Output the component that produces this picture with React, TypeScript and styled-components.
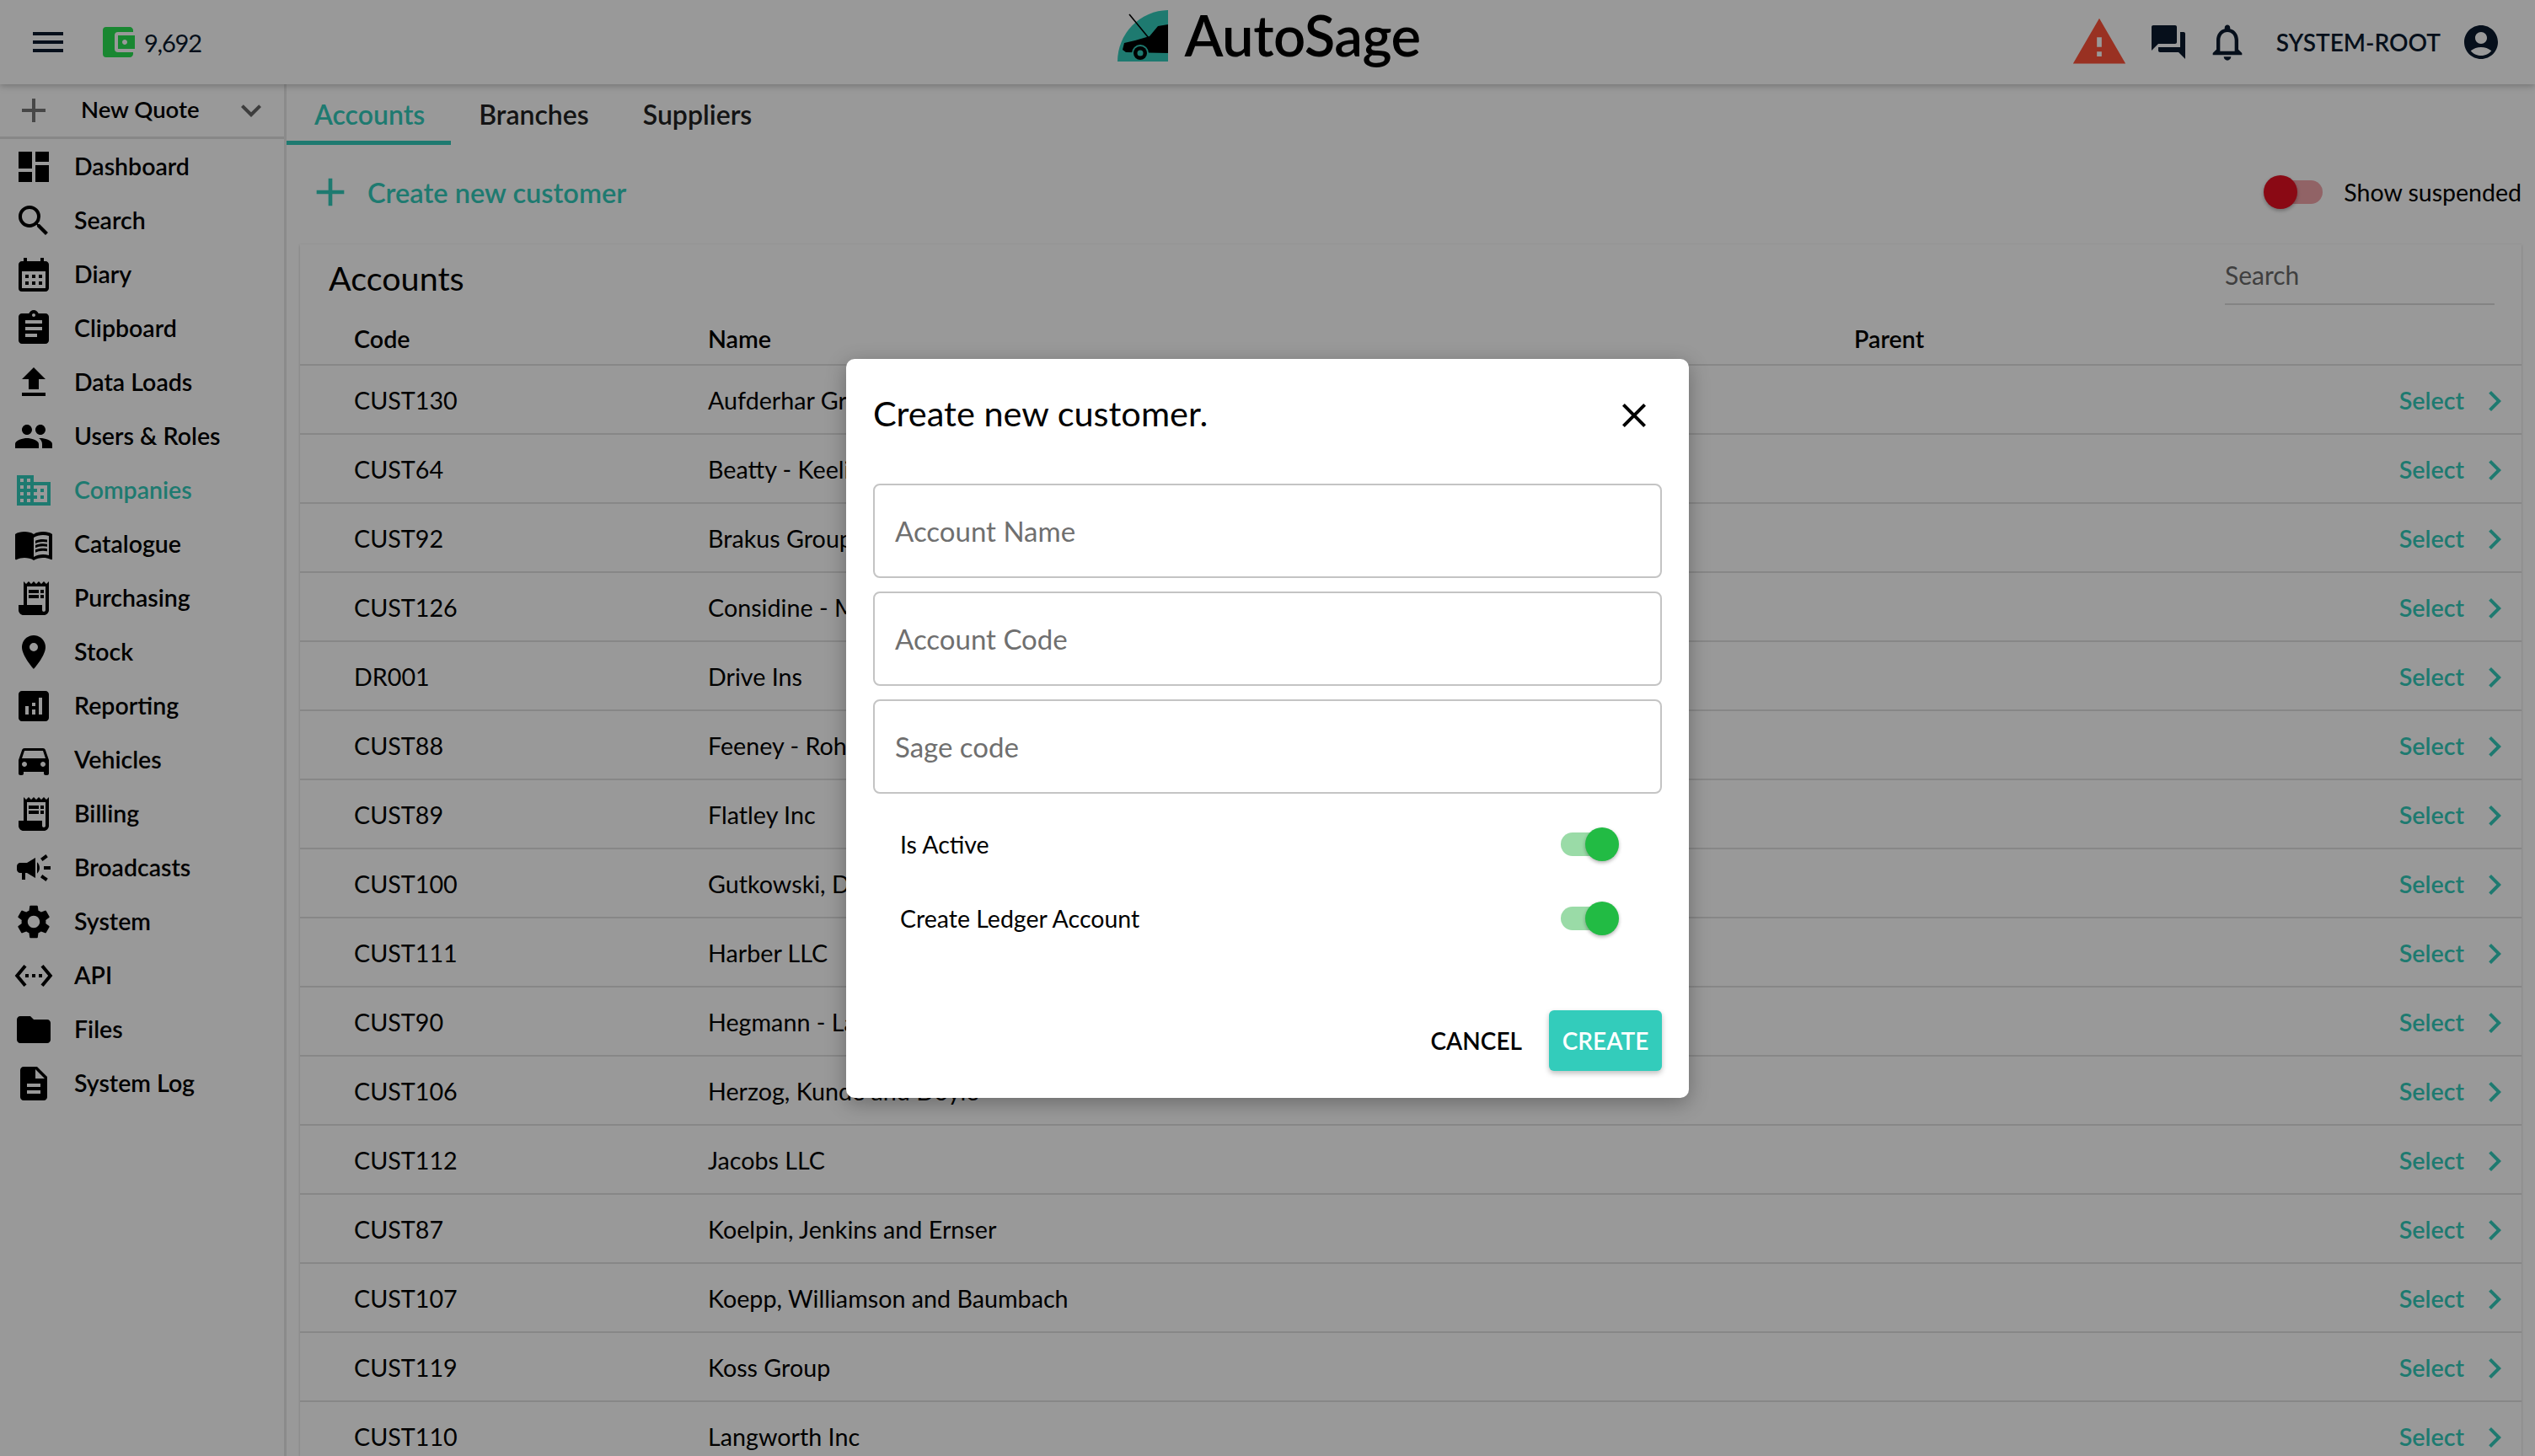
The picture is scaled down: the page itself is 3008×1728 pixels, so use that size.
import React from "react";
import styled, { createGlobalStyle } from "styled-components";
import {
  MdAccountBalanceWallet,
  MdAccountCircle,
  MdAdd,
  MdAnalytics,
  MdAssignment,
  MdCalendarMonth,
  MdCampaign,
  MdChevronRight,
  MdClose,
  MdDashboard,
  MdDescription,
  MdDirectionsCar,
  MdDomain,
  MdExpandMore,
  MdFileUpload,
  MdFolder,
  MdForum,
  MdMenu,
  MdMenuBook,
  MdNotificationsNone,
  MdPeople,
  MdPlace,
  MdReceiptLong,
  MdSearch,
  MdSettings,
  MdSettingsEthernet,
  MdWarning,
} from "react-icons/md";

const TEAL = "#33ccbb";
const INK = "#0a1a2e";
const FONT = `"Lato", "Noto Sans", sans-serif`;

const GlobalStyle = createGlobalStyle`
  html, body {
    margin: 0;
    background: #fff;
  }
  #root {
    width: 3008px;
    height: 1728px;
    overflow: hidden;
    position: relative;
    font-family: ${FONT};
    color: #000;
  }
  * {
    box-sizing: border-box;
  }
`;

const Page = styled.div`
  width: 3008px;
  height: 1728px;
  display: flex;
  flex-direction: column;
`;

const Header = styled.header`
  height: 100px;
  flex: none;
  display: grid;
  grid-template-columns: 1fr auto 1fr;
  align-items: center;
  background: #fff;
  box-shadow: 0 2px 8px rgba(0, 0, 0, 0.25);
  position: relative;
  z-index: 2;
`;

const HeaderLeft = styled.div`
  display: flex;
  align-items: center;
  padding-left: 33px;
  color: ${INK};
`;

const Wallet = styled.div`
  display: flex;
  align-items: center;
  margin-left: 35px;
  font-size: 29px;
  font-weight: 400;
  letter-spacing: -1.2px;
  color: ${INK};
  svg {
    color: #2ae153;
    margin-right: 7px;
  }
`;

const Logo = styled.div`
  display: flex;
  align-items: center;
  gap: 19px;
  margin-top: -14px;
  margin-left: 4px;
`;

const LogoText = styled.span`
  font-size: 67px;
  font-weight: 600;
  letter-spacing: -0.5px;
  line-height: 72px;
  margin-top: -5px;
`;

const HeaderRight = styled.div`
  display: flex;
  align-items: center;
  justify-content: flex-end;
  padding-right: 40px;
  color: ${INK};
`;

const AlertIcon = styled(MdWarning)`
  color: #ff533a;
  margin-right: 24px;
`;

const BellIcon = styled(MdNotificationsNone)`
  margin-left: 20px;
`;

const UserName = styled.span`
  font-size: 28px;
  font-weight: 600;
  margin: 0 24px 0 32px;
`;

const Body = styled.div`
  flex: 1;
  display: flex;
  min-height: 0;
`;

const Sidebar = styled.aside`
  width: 340px;
  flex: none;
  border-right: 3px solid #e8e8e8;
`;

const QuoteRow = styled.div`
  height: 65px;
  display: flex;
  align-items: center;
  padding-left: 16px;
  border-bottom: 3px solid #e2e2e2;
  font-size: 27.5px;
  font-weight: 600;
  svg:first-child {
    color: #777;
  }
`;

const QuoteLabel = styled.span`
  margin-left: 32px;
  width: 178px;
  margin-top: -3px;
`;

const NavList = styled.nav`
  display: flex;
  flex-direction: column;
  padding-top: 1px;
`;

const NavItem = styled.div<{ $active?: boolean }>`
  height: 64px;
  display: flex;
  align-items: center;
  gap: 24px;
  padding-left: 16px;
  font-size: 28.5px;
  font-weight: 600;
  color: ${({ $active }) => ($active ? TEAL : "#000")};
`;

const NavLabel = styled.span`
  margin-top: -3px;
`;

const Main = styled.main`
  flex: 1;
  min-width: 0;
  display: flex;
  flex-direction: column;
`;

const Tabs = styled.div`
  height: 72px;
  flex: none;
  display: flex;
`;

const Tab = styled.div<{ $active?: boolean }>`
  padding: 4px 31px 0 33px;
  display: flex;
  align-items: center;
  font-size: 32px;
  font-weight: 600;
  color: ${({ $active }) => ($active ? TEAL : "#222")};
  border-bottom: 5px solid ${({ $active }) => ($active ? TEAL : "transparent")};
`;

const ActionBar = styled.div`
  height: 118px;
  flex: none;
  display: flex;
  align-items: center;
  justify-content: space-between;
  padding: 0 16px 6px 24px;
`;

const CreateLink = styled.div`
  display: flex;
  align-items: center;
  gap: 16px;
  font-size: 32.6px;
  font-weight: 600;
  color: ${TEAL};
`;

const SuspendedToggle = styled.label`
  display: flex;
  align-items: center;
  gap: 25px;
  font-size: 28.5px;
`;

const Track = styled.span<{ $color: string }>`
  position: relative;
  display: block;
  width: 68px;
  height: 28px;
  border-radius: 14px;
  background: ${({ $color }) => $color};
`;

const Thumb = styled.span<{ $color: string; $on?: boolean }>`
  position: absolute;
  top: -6px;
  ${({ $on }) => ($on ? "right: -1px;" : "left: -2px;")}
  width: 40px;
  height: 40px;
  border-radius: 50%;
  background: ${({ $color }) => $color};
  box-shadow: 0 2px 4px rgba(0, 0, 0, 0.3);
`;

const Card = styled.section`
  flex: 1;
  min-height: 0;
  margin: 0 16px;
  box-shadow: 0 1px 3px rgba(0, 0, 0, 0.2);
`;

const CardHead = styled.div`
  height: 86px;
  display: flex;
  justify-content: space-between;
  padding: 0 32px 0 34px;
`;

const CardTitle = styled.h2`
  margin: 16px 0 0;
  font-size: 39.5px;
  font-weight: 400;
`;

const SearchBox = styled.div`
  width: 320px;
  height: 72px;
  display: flex;
  align-items: center;
  padding-top: 2px;
  font-size: 30px;
  color: #6a6a6a;
  border-bottom: 2px solid #dcdcdc;
`;

const Row = styled.div<{ $head?: boolean }>`
  display: grid;
  grid-template-columns: 420px 1360px 1fr auto;
  align-items: center;
  height: ${({ $head }) => ($head ? "58px" : "82px")};
  padding: ${({ $head }) => ($head ? "0 8px 4px 64px" : "1px 8px 0 64px")};
  border-bottom: 2px solid #e2e2e2;
  font-size: 28.7px;
  font-weight: ${({ $head }) => ($head ? 600 : 400)};
`;

const SelectLink = styled.div`
  display: flex;
  align-items: center;
  gap: 12px;
  font-weight: 600;
  color: ${TEAL};
  svg {
    margin-top: 2px;
  }
`;

const Backdrop = styled.div`
  position: absolute;
  inset: 0;
  z-index: 10;
  display: flex;
  align-items: center;
  justify-content: center;
  background: rgba(0, 0, 0, 0.4);
`;

const Modal = styled.div`
  width: 1000px;
  height: 877px;
  padding: 0 32px;
  display: flex;
  flex-direction: column;
  background: #fff;
  border-radius: 10px;
  box-shadow: 0 6px 24px rgba(0, 0, 0, 0.3);
`;

const ModalHead = styled.div`
  height: 148px;
  flex: none;
  display: flex;
  align-items: center;
  justify-content: space-between;
  padding-right: 9px;
  padding-bottom: 14px;
`;

const ModalTitle = styled.h3`
  margin: 0 0 5px;
  font-size: 41.5px;
  font-weight: 400;
`;

const FieldStack = styled.div`
  display: flex;
  flex-direction: column;
  gap: 16px;
`;

const Field = styled.div`
  height: 112px;
  display: flex;
  align-items: center;
  padding-left: 24px;
  font-size: 33px;
  color: #6f6f6f;
  border: 2px solid #c4c4c4;
  border-radius: 8px;
`;

const SwitchRow = styled.div`
  height: 88px;
  display: flex;
  align-items: center;
  justify-content: space-between;
  padding: 0 52px 0 32px;
  font-size: 28.5px;
`;

const Switches = styled.div`
  margin-top: 16px;
`;

const ModalActions = styled.div`
  margin-top: auto;
  margin-bottom: 32px;
  display: flex;
  align-items: center;
  justify-content: flex-end;
  gap: 32px;
`;

const CancelButton = styled.div`
  font-size: 28px;
  font-weight: 600;
`;

const CreateButton = styled.div`
  width: 134px;
  height: 72px;
  display: flex;
  align-items: center;
  justify-content: center;
  font-size: 28px;
  font-weight: 600;
  color: #fff;
  background: ${TEAL};
  border-radius: 6px;
  box-shadow: 0 3px 6px rgba(0, 0, 0, 0.25);
`;

const navItems = [
  { label: "Dashboard", Icon: MdDashboard },
  { label: "Search", Icon: MdSearch },
  { label: "Diary", Icon: MdCalendarMonth },
  { label: "Clipboard", Icon: MdAssignment },
  { label: "Data Loads", Icon: MdFileUpload },
  { label: "Users & Roles", Icon: MdPeople },
  { label: "Companies", Icon: MdDomain, active: true },
  { label: "Catalogue", Icon: MdMenuBook },
  { label: "Purchasing", Icon: MdReceiptLong },
  { label: "Stock", Icon: MdPlace },
  { label: "Reporting", Icon: MdAnalytics },
  { label: "Vehicles", Icon: MdDirectionsCar },
  { label: "Billing", Icon: MdReceiptLong },
  { label: "Broadcasts", Icon: MdCampaign },
  { label: "System", Icon: MdSettings },
  { label: "API", Icon: MdSettingsEthernet },
  { label: "Files", Icon: MdFolder },
  { label: "System Log", Icon: MdDescription },
];

const accounts = [
  ["CUST130", "Aufderhar Group"],
  ["CUST64", "Beatty - Keeling"],
  ["CUST92", "Brakus Group"],
  ["CUST126", "Considine - Mann"],
  ["DR001", "Drive Ins"],
  ["CUST88", "Feeney - Rohan"],
  ["CUST89", "Flatley Inc"],
  ["CUST100", "Gutkowski, Dare"],
  ["CUST111", "Harber LLC"],
  ["CUST90", "Hegmann - Lang"],
  ["CUST106", "Herzog, Kunde and Doyle"],
  ["CUST112", "Jacobs LLC"],
  ["CUST87", "Koelpin, Jenkins and Ernser"],
  ["CUST107", "Koepp, Williamson and Baumbach"],
  ["CUST119", "Koss Group"],
  ["CUST110", "Langworth Inc"],
];

const CarLogo = () => (
  <svg width="60" height="62" viewBox="0 0 60 62">
    <path d="M60 0V61H0A61 61 0 0 1 60 0Z" fill={TEAL} />
    <path d="M14 5L37 33" stroke="#000" strokeWidth="1.6" />
    <path d="M60 17L48 19L38 31L21 36L8 39L6 47L10 50L60 51Z" fill="#000" />
    <circle cx="27" cy="51" r="10" fill={TEAL} />
    <circle cx="27" cy="51" r="8" fill="#000" />
    <circle cx="27" cy="51" r="3.5" fill={TEAL} />
  </svg>
);

const Switch = ({ track, thumb, on }: { track: string; thumb: string; on?: boolean }) => (
  <Track $color={track}>
    <Thumb $color={thumb} $on={on} />
  </Track>
);

export default function App() {
  return (
    <>
      <GlobalStyle />
      <Page>
        <Header>
          <HeaderLeft>
            <MdMenu size={48} />
            <Wallet>
              <MdAccountBalanceWallet size={48} />
              9,692
            </Wallet>
          </HeaderLeft>
          <Logo>
            <CarLogo />
            <LogoText>AutoSage</LogoText>
          </Logo>
          <HeaderRight>
            <AlertIcon size={68} />
            <MdForum size={48} />
            <BellIcon size={52} />
            <UserName>SYSTEM-ROOT</UserName>
            <MdAccountCircle size={48} />
          </HeaderRight>
        </Header>
        <Body>
          <Sidebar>
            <QuoteRow>
              <MdAdd size={48} />
              <QuoteLabel>New Quote</QuoteLabel>
              <MdExpandMore size={48} color="#666" />
            </QuoteRow>
            <NavList>
              {navItems.map(({ label, Icon, active }) => (
                <NavItem key={label} $active={active}>
                  <Icon size={48} />
                  <NavLabel>{label}</NavLabel>
                </NavItem>
              ))}
            </NavList>
          </Sidebar>
          <Main>
            <Tabs>
              <Tab $active>Accounts</Tab>
              <Tab>Branches</Tab>
              <Tab>Suppliers</Tab>
            </Tabs>
            <ActionBar>
              <CreateLink>
                <MdAdd size={56} />
                Create new customer
              </CreateLink>
              <SuspendedToggle>
                <Switch track="#f2a5ab" thumb="#e61022" />
                Show suspended
              </SuspendedToggle>
            </ActionBar>
            <Card>
              <CardHead>
                <CardTitle>Accounts</CardTitle>
                <SearchBox>Search</SearchBox>
              </CardHead>
              <Row $head>
                <div>Code</div>
                <div>Name</div>
                <div>Parent</div>
                <div />
              </Row>
              {accounts.map(([code, name]) => (
                <Row key={code}>
                  <div>{code}</div>
                  <div>{name}</div>
                  <div />
                  <SelectLink>
                    Select
                    <MdChevronRight size={48} />
                  </SelectLink>
                </Row>
              ))}
            </Card>
          </Main>
        </Body>
      </Page>
      <Backdrop>
        <Modal>
          <ModalHead>
            <ModalTitle>Create new customer.</ModalTitle>
            <MdClose size={48} />
          </ModalHead>
          <FieldStack>
            <Field>Account Name</Field>
            <Field>Account Code</Field>
            <Field>Sage code</Field>
          </FieldStack>
          <Switches>
            <SwitchRow>
              Is Active
              <Switch track="#9adba7" thumb="#22bb44" on />
            </SwitchRow>
            <SwitchRow>
              Create Ledger Account
              <Switch track="#9adba7" thumb="#22bb44" on />
            </SwitchRow>
          </Switches>
          <ModalActions>
            <CancelButton>CANCEL</CancelButton>
            <CreateButton>CREATE</CreateButton>
          </ModalActions>
        </Modal>
      </Backdrop>
    </>
  );
}
